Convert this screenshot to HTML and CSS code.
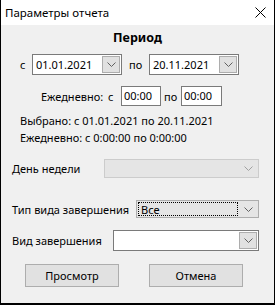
FILE: index.html
```html
<!DOCTYPE html>
<html lang="ru">
<head>
<meta charset="utf-8">
<link rel="stylesheet" href="styles.css">
</head>
<body>
<div class="window">
  <div class="titlebar">
    <span class="title">Параметры отчета</span>
    <svg class="close" width="11" height="11" viewBox="0 0 11 11"><path d="M0.5 0.5 L10.5 10.5 M10.5 0.5 L0.5 10.5" stroke="#000" stroke-width="1" fill="none"/></svg>
  </div>
  <div class="content">
    <div class="heading">Период</div>
    <div class="row row-dates">
      <span class="lbl-s">с</span>
      <div class="combo date">
        <span class="val">01.01.2021</span>
        <span class="btn"><svg width="9" height="5" viewBox="0 0 9 5"><path d="M0.5 0.5 L4.5 4.5 L8.5 0.5" stroke="#606060" fill="none"/></svg></span>
      </div>
      <span class="lbl-po">по</span>
      <div class="combo date">
        <span class="val">20.11.2021</span>
        <span class="btn"><svg width="9" height="5" viewBox="0 0 9 5"><path d="M0.5 0.5 L4.5 4.5 L8.5 0.5" stroke="#606060" fill="none"/></svg></span>
      </div>
    </div>
    <div class="row row-times">
      <span class="lbl-daily">Ежедневно:</span>
      <span class="lbl-s2">с</span>
      <div class="tbox t1">00:00</div>
      <span class="lbl-po2">по</span>
      <div class="tbox t2">00:00</div>
    </div>
    <div class="info">
      <div>Выбрано: с 01.01.2021 по 20.11.2021</div>
      <div>Ежедневно: с 0:00:00 по 0:00:00</div>
    </div>
    <div class="row field f-day">
      <span class="flabel">День недели</span>
      <div class="combo disabled w-day">
        <span class="val"></span>
        <span class="arrow"><svg width="9" height="5" viewBox="0 0 9 5"><path d="M0.5 0.5 L4.5 4.5 L8.5 0.5" stroke="#a0a0a0" fill="none"/></svg></span>
      </div>
    </div>
    <div class="row field f-type">
      <span class="flabel">Тип вида завершения</span>
      <div class="combo list w-type">
        <span class="focus">Все</span>
        <span class="arrow"><svg width="9" height="5" viewBox="0 0 9 5"><path d="M0.5 0.5 L4.5 4.5 L8.5 0.5" stroke="#606060" fill="none"/></svg></span>
      </div>
    </div>
    <div class="row field f-kind">
      <span class="flabel">Вид завершения</span>
      <div class="combo w-kind">
        <span class="val"></span>
        <span class="btn"><svg width="9" height="5" viewBox="0 0 9 5"><path d="M0.5 0.5 L4.5 4.5 L8.5 0.5" stroke="#606060" fill="none"/></svg></span>
      </div>
    </div>
    <div class="row buttons">
      <div class="button">Просмотр</div>
      <div class="button">Отмена</div>
    </div>
  </div>
</div>
</body>
</html>
```

FILE: styles.css
```css
* { box-sizing: border-box; }
html, body { margin: 0; padding: 0; }
body {
  width: 275px;
  height: 305px;
  overflow: hidden;
  font-family: "Noto Sans", "Liberation Sans", sans-serif;
  font-size: 11px;
  color: #000;
}
.window {
  width: 275px;
  height: 305px;
  background: #f0f0f0;
  border: 1px solid #000;
  border-top: none;
  border-bottom-width: 2px;
  display: flex;
  flex-direction: column;
}
.titlebar {
  height: 25px;
  background: #fff;
  display: flex;
  align-items: center;
  padding-left: 4px;
  padding-right: 8px;
  font-size: 11.5px;
}
.title { flex: 1; line-height: 16px; }
.close { display: block; }
.content {
  display: flex;
  flex-direction: column;
}
.heading {
  margin-top: 5px;
  height: 16px;
  line-height: 16px;
  font-weight: bold;
  font-size: 12.5px;
  text-align: center;
}
.row { display: flex; align-items: center; }
.row-dates { margin-top: 8px; height: 21px; }
.lbl-s { width: 31px; padding-left: 19px; }
.lbl-po { width: 27px; padding-left: 7px; }
.combo {
  height: 100%;
  background: #fff;
  border: 1px solid #7a7a7a;
  display: flex;
  align-items: center;
  padding: 1px;
}
.combo .val { flex: 1; padding-left: 2px; line-height: 16px; }
.combo .btn {
  width: 18px;
  height: 100%;
  background: #e1e1e1;
  border: 1px solid #adadad;
  display: flex;
  align-items: center;
  justify-content: center;
}
.combo .btn svg, .combo .arrow svg { display: block; }
.date { width: 90px; }
.row-times { margin-top: 11px; height: 20px; padding-left: 40px; }
.lbl-daily { width: 67px; }
.lbl-s2 { width: 13px; }
.tbox {
  height: 20px;
  background: #fff;
  border: 1px solid #7a7a7a;
  padding-left: 2px;
  line-height: 18px;
}
.t1 { width: 40px; }
.t2 { width: 41px; }
.lbl-po2 { width: 20px; padding-left: 3px; }
.info {
  margin-top: 6px;
  padding-left: 19px;
  line-height: 17px;
}
.field { padding-left: 11px; }
.flabel { flex: none; }
.f-day { margin-top: 13px; height: 19px; }
.f-type { margin-top: 22px; height: 18px; }
.f-kind { margin-top: 12px; height: 21px; }
.w-day { margin-left: auto; width: 155px; margin-right: 15px; }
.w-type { margin-left: auto; width: 123px; margin-right: 15px; }
.w-kind { margin-left: auto; width: 146px; margin-right: 15px; }
.disabled {
  background: #e5e5e5;
  border-color: #cccccc;
}
.combo .arrow {
  width: 18px;
  display: flex;
  align-items: center;
  justify-content: center;
  margin-left: auto;
}
.list {
  background: #e5e5e5;
  border-color: #adadad;
}
.list .focus {
  flex: 1;
  height: 100%;
  border: 1px dotted #000;
  padding-left: 2px;
  line-height: 14px;
  margin-right: 1px;
}
.buttons {
  margin-top: 13px;
  height: 23px;
  padding-left: 24px;
}
.button {
  width: 94px;
  height: 23px;
  background: #e1e1e1;
  border: 1px solid #adadad;
  text-align: center;
  line-height: 21px;
}
.button + .button { margin-left: 30px; }
```
